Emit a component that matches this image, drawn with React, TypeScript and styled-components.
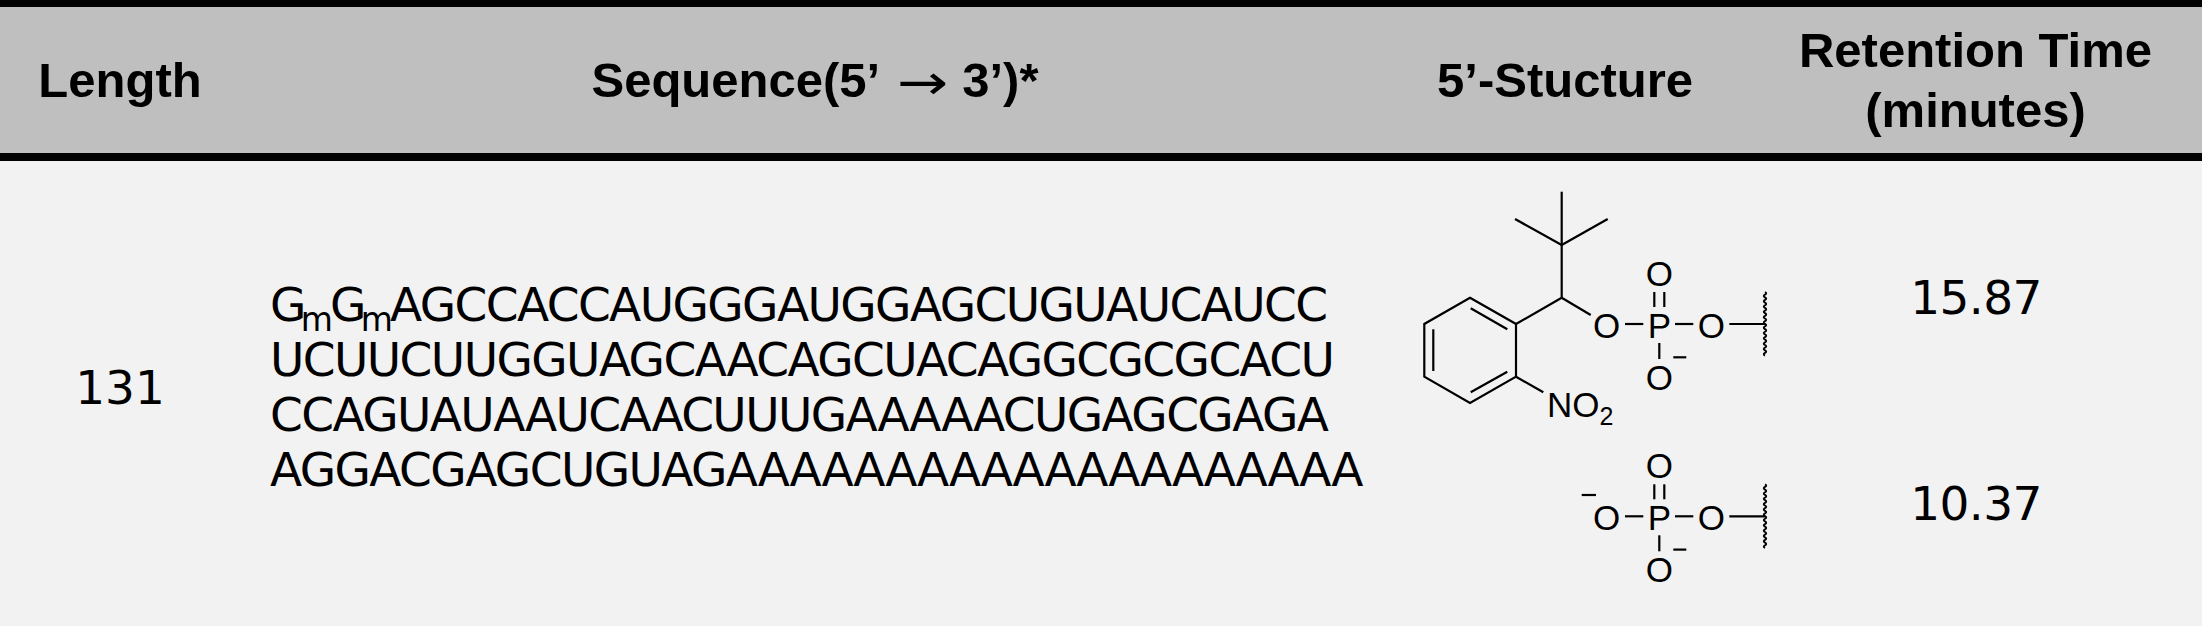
import React from "react";
import styled, { createGlobalStyle } from "styled-components";

const GlobalStyle = createGlobalStyle`
  html, body {
    margin: 0;
    padding: 0;
    background: #ffffff;
  }
  body {
    width: 2206px;
    height: 626px;
    overflow: hidden;
  }
`;

const COLS = "240px 1150px 350px 462px";

const Table = styled.div`
  width: 2202px;
  color: #000;
`;

const HeaderRow = styled.div`
  display: grid;
  grid-template-columns: ${COLS};
  height: 146px;
  background: #bfbfbf;
  border-top: 7px solid #000;
  border-bottom: 8px solid #000;
  font-family: "Liberation Sans", Arial, sans-serif;
  font-weight: 700;
  font-size: 49px;
  line-height: 60px;
`;

const HeadCell = styled.div<{ $shift?: number }>`
  display: flex;
  align-items: center;
  justify-content: center;
  text-align: center;
  white-space: pre;
  padding-left: ${(p) => p.$shift ?? 0}px;
`;

const Arrow = styled.span`
  display: inline-block;
  font-family: "DejaVu Sans", sans-serif;
  font-weight: 400;
  font-size: 49px;
  transform: scaleX(1.25) translateY(3px);
  margin: 0 19px 0 22px;
`;

const BodyRow = styled.div`
  display: grid;
  grid-template-columns: ${COLS};
  grid-template-rows: 285px 180px;
  background: #f2f2f2;
  font-family: "DejaVu Sans", Verdana, sans-serif;
  font-size: 47px;
  line-height: 55px;
`;

const LengthCell = styled.div`
  grid-column: 1;
  grid-row: 1 / span 2;
  align-self: center;
  text-align: center;
  padding-bottom: 13px;
`;

const SequenceCell = styled.div`
  grid-column: 2;
  grid-row: 1 / span 2;
  align-self: center;
  padding-left: 30px;
  padding-bottom: 13px;
  white-space: nowrap;
  letter-spacing: -1.6px;
`;

const SeqLine = styled.div`
  height: 55px;
`;

const Mod = styled.sub`
  font-size: 33px;
  line-height: 0;
  vertical-align: -10px;
  letter-spacing: 0;
  margin-left: -4px;
  margin-right: -3px;
`;

const StructureCell = styled.div<{ $row: number; $top: number }>`
  grid-column: 3;
  grid-row: ${(p) => p.$row};
  padding-left: 20px;
  padding-top: ${(p) => p.$top}px;
`;

const TimeCell = styled.div<{ $row: number; $top: number }>`
  grid-column: 4;
  grid-row: ${(p) => p.$row};
  text-align: center;
  padding-left: 10px;
  padding-top: ${(p) => p.$top}px;
  letter-spacing: -0.6px;
`;

const Chem = styled.svg`
  display: block;
  overflow: visible;
  font-family: "Liberation Sans", Arial, sans-serif;
  font-size: 35px;

  line,
  polygon {
    stroke: #000;
    stroke-width: 2.2;
    fill: none;
  }
  text {
    fill: #000;
  }
  path {
    fill: none;
    stroke: #000;
    stroke-width: 1.9;
  }
`;

// squiggly bond-break line
const wavy = (x: number, y0: number, y1: number) => {
  const step = 2.65;
  let d = `M${x} ${y0}`;
  let s = 1;
  for (let y = y0; y < y1; y += step) {
    d += ` Q${(x + 2.4 * s).toFixed(2)} ${(y + step / 2).toFixed(2)} ${x} ${(y + step).toFixed(2)}`;
    s = -s;
  }
  return d;
};

// O-P(=O)(O-)-O~ drawn around the P atom
const Phosphate = ({ x, y }: { x: number; y: number }) => (
  <g transform={`translate(${x} ${y})`}>
    <text x={-52.6} y={12.5} textAnchor="middle">O</text>
    <line x1={-34.3} y1={-1} x2={-16} y2={-1} />
    <text x={0} y={12.5} textAnchor="middle">P</text>
    <line x1={-5} y1={-33} x2={-5} y2={-18} />
    <line x1={5} y1={-33} x2={5} y2={-18} />
    <text x={0} y={-39.5} textAnchor="middle">O</text>
    <line x1={15.7} y1={-1} x2={34} y2={-1} />
    <text x={52} y={12.5} textAnchor="middle">O</text>
    <line x1={70} y1={-1} x2={105.7} y2={-1} />
    <path d={wavy(105.7, -33, 30)} />
    <line x1={0} y1={18} x2={0} y2={34} />
    <line x1={14} y1={32.3} x2={27} y2={32.3} />
    <text x={0} y={65} textAnchor="middle">O</text>
  </g>
);

const NpeStructure = () => (
  <Chem width={370} height={260} viewBox="0 0 370 260">
    <polygon points="60,117.7 106,144 106,196.7 60,223 14.3,196.7 14.3,144" />
    <line x1={60.7} y1={128.3} x2={97.3} y2={149.3} />
    <line x1={23.3} y1={149.3} x2={23.3} y2={191} />
    <line x1={60.7} y1={212.3} x2={97.3} y2={191.7} />
    <line x1={106} y1={144} x2={151.7} y2={117.7} />
    <line x1={151.7} y1={117.7} x2={151.7} y2={65} />
    <line x1={151.7} y1={65} x2={151.7} y2={11.7} />
    <line x1={151.7} y1={65} x2={105} y2={39} />
    <line x1={151.7} y1={65} x2={197.7} y2={39} />
    <line x1={151.7} y1={117.7} x2={180.7} y2={135} />
    <line x1={106} y1={196.7} x2={133.3} y2={212.3} />
    <text x={137} y={237}>
      NO
      <tspan fontSize={25} dy={8}>2</tspan>
    </text>
    <Phosphate x={249.3} y={145} />
  </Chem>
);

const MonoPhosphate = () => (
  <Chem width={370} height={180} viewBox="0 0 370 180">
    <line x1={171.7} y1={49} x2={186} y2={49} />
    <Phosphate x={249.3} y={71.3} />
  </Chem>
);

export default function App() {
  return (
    <>
      <GlobalStyle />
      <Table>
        <HeaderRow>
          <HeadCell>Length</HeadCell>
          <HeadCell>
            Sequence(5’<Arrow>→</Arrow>3’)*
          </HeadCell>
          <HeadCell>5’-Stucture</HeadCell>
          <HeadCell $shift={9}>
            {"Retention Time\n(minutes)"}
          </HeadCell>
        </HeaderRow>
        <BodyRow>
          <LengthCell>131</LengthCell>
          <SequenceCell>
            <SeqLine>
              G<Mod>m</Mod>G<Mod>m</Mod>AGCCACCAUGGGAUGGAGCUGUAUCAUCC
            </SeqLine>
            <SeqLine>UCUUCUUGGUAGCAACAGCUACAGGCGCGCACU</SeqLine>
            <SeqLine>CCAGUAUAAUCAACUUUGAAAAACUGAGCGAGA</SeqLine>
            <SeqLine>AGGACGAGCUGUAGAAAAAAAAAAAAAAAAAAAA</SeqLine>
          </SequenceCell>
          <StructureCell $row={1} $top={19}>
            <NpeStructure />
          </StructureCell>
          <TimeCell $row={1} $top={109}>
            15.87
          </TimeCell>
          <StructureCell $row={2} $top={0}>
            <MonoPhosphate />
          </StructureCell>
          <TimeCell $row={2} $top={30}>
            10.37
          </TimeCell>
        </BodyRow>
      </Table>
    </>
  );
}
